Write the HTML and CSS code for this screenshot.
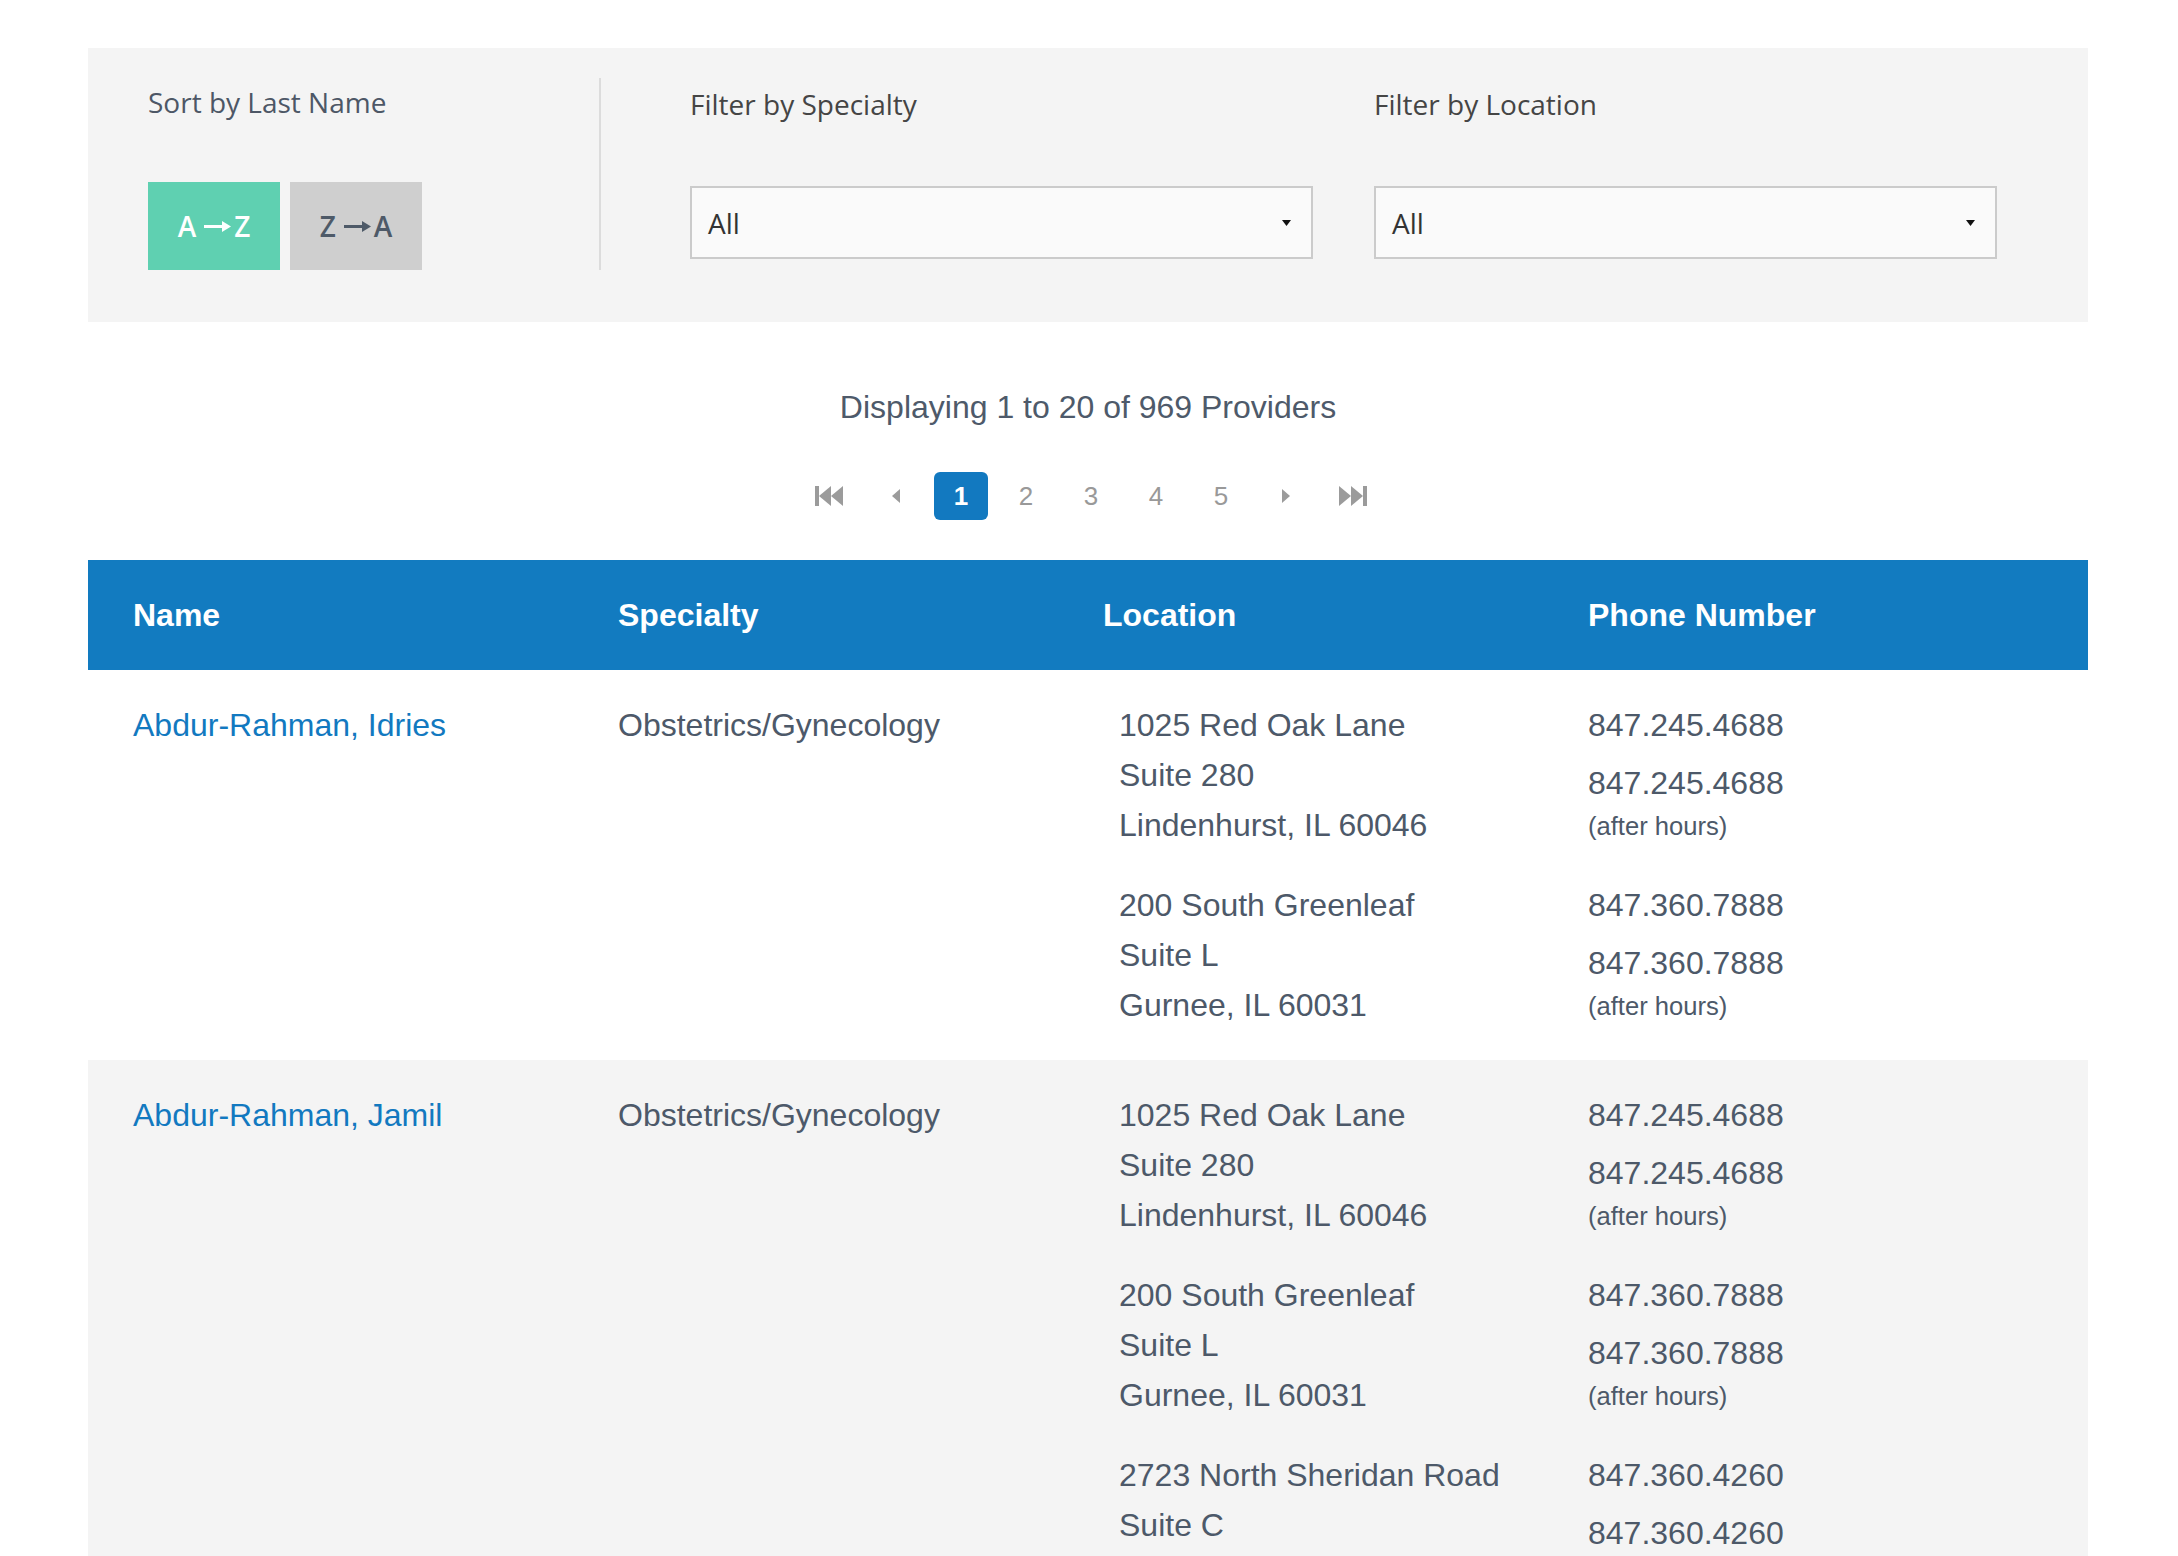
FILE: index.html
```html
<!DOCTYPE html>
<html lang="en">
<head>
<meta charset="utf-8">
<title>Providers</title>
<link rel="stylesheet" href="styles.css">
</head>
<body>
<div class="page">
  <section class="filters">
    <div class="sort">
      <div class="label label-sort">Sort by Last Name</div>
      <div class="sort-buttons">
        <button class="sbtn sbtn-on">A<svg class="arr" width="27" height="11" viewBox="0 0 27 11"><rect x="0" y="4" width="20" height="3" fill="currentColor"/><polygon points="18,0 27,5.5 18,11" fill="currentColor"/></svg>Z</button>
        <button class="sbtn sbtn-off">Z<svg class="arr" width="27" height="11" viewBox="0 0 27 11"><rect x="0" y="4" width="20" height="3" fill="currentColor"/><polygon points="18,0 27,5.5 18,11" fill="currentColor"/></svg>A</button>
      </div>
    </div>
    <div class="filter-group">
      <div class="filter">
        <div class="label">Filter by Specialty</div>
        <div class="select"><span>All</span><svg class="caret" width="9" height="6" viewBox="0 0 9 6"><polygon points="0,0 9,0 4.5,6" fill="#111"/></svg></div>
      </div>
      <div class="filter">
        <div class="label">Filter by Location</div>
        <div class="select"><span>All</span><svg class="caret" width="9" height="6" viewBox="0 0 9 6"><polygon points="0,0 9,0 4.5,6" fill="#111"/></svg></div>
      </div>
    </div>
  </section>

  <p class="count">Displaying 1 to 20 of 969 Providers</p>

  <nav class="pager">
    <span class="pg pg-end"><svg width="28" height="20" viewBox="0 0 28 20"><rect x="0" y="0" width="4" height="20" fill="#9b9b9b"/><polygon points="4,10 16,0 16,20" fill="#9b9b9b"/><polygon points="16,10 28,0 28,20" fill="#9b9b9b"/></svg></span>
    <span class="pg"><svg width="8" height="14" viewBox="0 0 8 14"><polygon points="0,7 8,0 8,14" fill="#9b9b9b"/></svg></span>
    <span class="pg pg-active">1</span>
    <span class="pg">2</span>
    <span class="pg">3</span>
    <span class="pg">4</span>
    <span class="pg">5</span>
    <span class="pg"><svg width="8" height="14" viewBox="0 0 8 14"><polygon points="8,7 0,0 0,14" fill="#9b9b9b"/></svg></span>
    <span class="pg pg-end"><svg width="28" height="20" viewBox="0 0 28 20"><polygon points="12,10 0,0 0,20" fill="#9b9b9b"/><polygon points="24,10 12,0 12,20" fill="#9b9b9b"/><rect x="24" y="0" width="4" height="20" fill="#9b9b9b"/></svg></span>
  </nav>

  <div class="table">
    <div class="thead">
      <div class="th">Name</div>
      <div class="th">Specialty</div>
      <div class="th">Location</div>
      <div class="th">Phone Number</div>
    </div>

    <div class="row">
      <div class="cell"><a class="name" href="#">Abdur-Rahman, Idries</a></div>
      <div class="cell">Obstetrics/Gynecology</div>
      <div class="locs">
        <div class="loc">
          <div class="addr"><div>1025 Red Oak Lane</div><div>Suite 280</div><div>Lindenhurst, IL 60046</div></div>
          <div class="phones"><div class="ph">847.245.4688</div><div class="ph ph2">847.245.4688</div><div class="ah">(after hours)</div></div>
        </div>
        <div class="loc">
          <div class="addr"><div>200 South Greenleaf</div><div>Suite L</div><div>Gurnee, IL 60031</div></div>
          <div class="phones"><div class="ph">847.360.7888</div><div class="ph ph2">847.360.7888</div><div class="ah">(after hours)</div></div>
        </div>
      </div>
    </div>

    <div class="row row-alt">
      <div class="cell"><a class="name" href="#">Abdur-Rahman, Jamil</a></div>
      <div class="cell">Obstetrics/Gynecology</div>
      <div class="locs">
        <div class="loc">
          <div class="addr"><div>1025 Red Oak Lane</div><div>Suite 280</div><div>Lindenhurst, IL 60046</div></div>
          <div class="phones"><div class="ph">847.245.4688</div><div class="ph ph2">847.245.4688</div><div class="ah">(after hours)</div></div>
        </div>
        <div class="loc">
          <div class="addr"><div>200 South Greenleaf</div><div>Suite L</div><div>Gurnee, IL 60031</div></div>
          <div class="phones"><div class="ph">847.360.7888</div><div class="ph ph2">847.360.7888</div><div class="ah">(after hours)</div></div>
        </div>
        <div class="loc">
          <div class="addr"><div>2723 North Sheridan Road</div><div>Suite C</div><div>Waukegan, IL 60085</div></div>
          <div class="phones"><div class="ph">847.360.4260</div><div class="ph ph2">847.360.4260</div><div class="ah">(after hours)</div></div>
        </div>
      </div>
    </div>
  </div>
</div>
</body>
</html>
```

FILE: styles.css
```css
* { box-sizing: border-box; }
html, body { margin: 0; padding: 0; background: #fff; }
body { font-family: "Liberation Sans", Arial, Helvetica, sans-serif; color: #4d5969; }

.page { width: 2000px; margin: 0 0 0 88px; padding-top: 48px; }

/* Filters panel */
.filters {
  background: #f4f4f4;
  display: flex;
  padding: 30px 0 52px 0;
}
.sort {
  width: 513px;
  padding-left: 60px;
  border-right: 2px solid #dcdcdc;
  padding-top: 3px;
}
.label {
  font-family: "Open Sans", sans-serif;
  font-size: 28px;
  font-weight: 500;
  line-height: 42px;
  color: #454545;
}
.label-sort { color: #4d5766; }
.sort-buttons { display: flex; gap: 10px; margin-top: 59px; }
.sbtn {
  width: 132px;
  height: 88px;
  border: 0;
  padding: 0;
  font-family: "Open Sans", sans-serif;
  font-size: 28px;
  font-weight: 600;
  display: flex;
  align-items: center;
  justify-content: center;
}
.sbtn .arr { display: block; margin: 0 3px 0 8px; }
.sbtn-on { background: #5fd0b1; color: #fff; }
.sbtn-off { background: #cfcfcf; color: #4e5a68; }

.filter-group {
  flex: 1;
  display: flex;
  gap: 61px;
  padding: 5px 91px 0 89px;
}
.filter { flex: 1; }
.select {
  margin-top: 61px;
  height: 73px;
  background: #fafafa;
  border: 2px solid #cbcbcb;
  display: flex;
  align-items: center;
  justify-content: space-between;
  padding: 0 20px 0 16px;
  font-family: "Open Sans", sans-serif;
  font-size: 28px;
  color: #333;
}
.caret { display: block; }

/* Count & pager */
.count {
  margin: 61px 0 0 0;
  text-align: center;
  font-size: 32px;
  line-height: 48px;
  color: #4e5a6a;
}
.pager {
  display: flex;
  justify-content: center;
  align-items: center;
  gap: 11px;
  margin-top: 41px;
  padding-left: 6px;
}
.pg {
  width: 54px;
  height: 48px;
  display: flex;
  align-items: center;
  justify-content: center;
  font-size: 26px;
  color: #999;
}
.pg svg { display: block; }
.pg-end { width: 58px; }
.pg-active {
  background: #1279c0;
  color: #fff;
  font-weight: bold;
  border-radius: 6px;
}

/* Table */
.table { margin-top: 40px; }
.thead, .row {
  display: grid;
  grid-template-columns: 485px 485px 970px;
}
.thead { grid-template-columns: 485px 485px 485px 545px; background: #127bc0; }
.th {
  padding: 30px 0 30px 45px;
  font-size: 32px;
  line-height: 50px;
  font-weight: bold;
  color: #fff;
}
.row { padding: 30px 0; font-size: 32px; line-height: 50px; }
.row-alt { background: #f4f4f4; }
.cell { padding-left: 45px; }
.name { color: #1279c0; text-decoration: none; }
.locs { display: flex; flex-direction: column; gap: 30px; }
.loc {
  display: grid;
  grid-template-columns: 485px 485px;
  min-height: 150px;
}
.addr { padding-left: 61px; }
.phones { padding-left: 45px; }
.ph2 { margin-top: 8px; }
.ah { font-size: 25.6px; line-height: 36px; }
```
